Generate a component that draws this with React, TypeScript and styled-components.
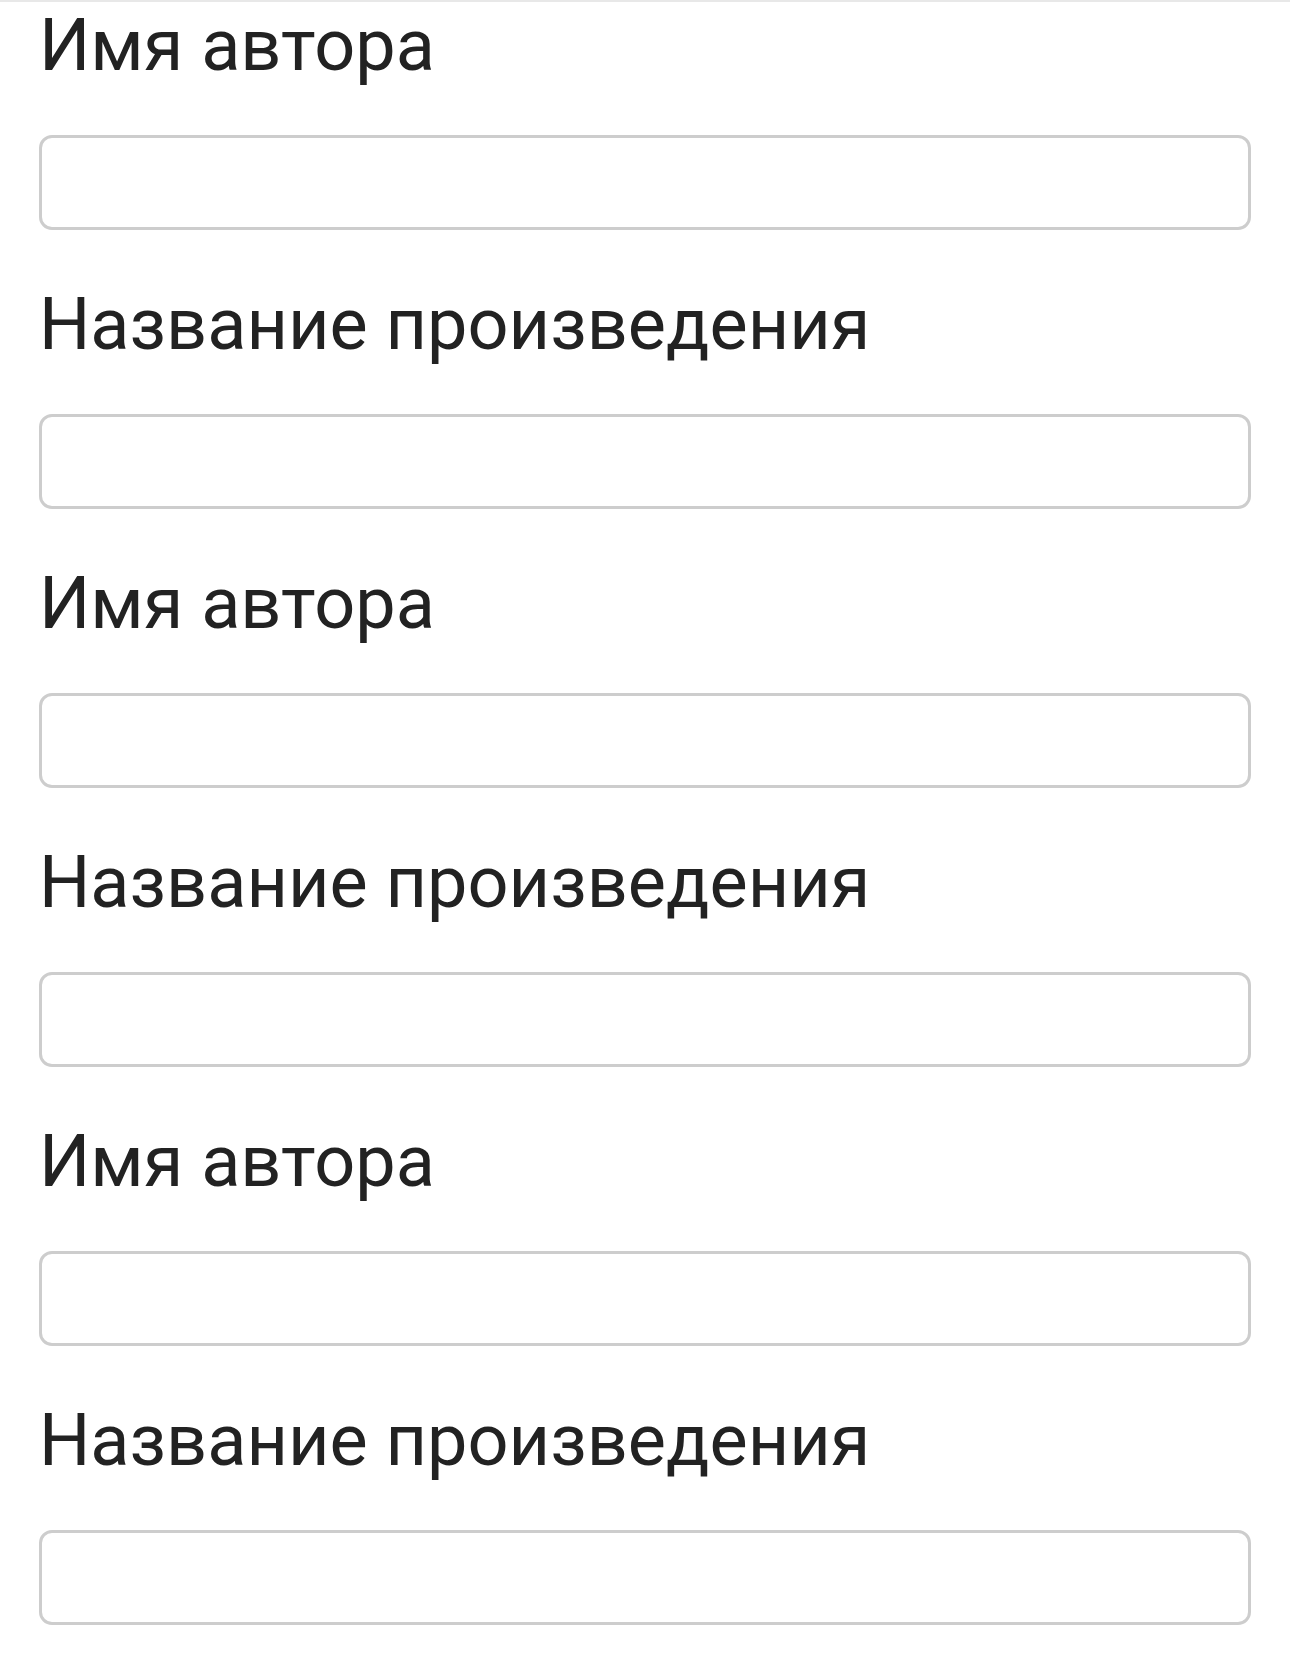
import React from "react";
import styled, { createGlobalStyle } from "styled-components";

const GlobalStyle = createGlobalStyle`
  html, body {
    margin: 0;
    padding: 0;
    background: #ffffff;
  }
`;

const Page = styled.div`
  border-top: 2px solid #e8e8e8;
  padding: 0 39px;
  font-family: Roboto, "Noto Sans", sans-serif;
  color: #222222;
`;

const Field = styled.div`
  display: flex;
  flex-direction: column;
  padding-top: 2px;
  margin-bottom: 51px;
`;

const Label = styled.label`
  font-size: 72px;
  line-height: 84px;
  font-weight: 400;
  margin-bottom: 47px;
`;

const Input = styled.input`
  box-sizing: border-box;
  width: 100%;
  height: 95px;
  border: 3px solid #cdcdcd;
  border-radius: 13px;
  background: #ffffff;
  font-family: inherit;
  font-size: 48px;
  padding: 0 20px;
  outline: none;
`;

const fields = [
  "Имя автора",
  "Название произведения",
  "Имя автора",
  "Название произведения",
  "Имя автора",
  "Название произведения",
];

function App() {
  return (
    <>
      <GlobalStyle />
      <Page>
        {fields.map((title, index) => (
          <Field key={index}>
            <Label htmlFor={`field-${index}`}>{title}</Label>
            <Input id={`field-${index}`} type="text" />
          </Field>
        ))}
      </Page>
    </>
  );
}

export default App;
